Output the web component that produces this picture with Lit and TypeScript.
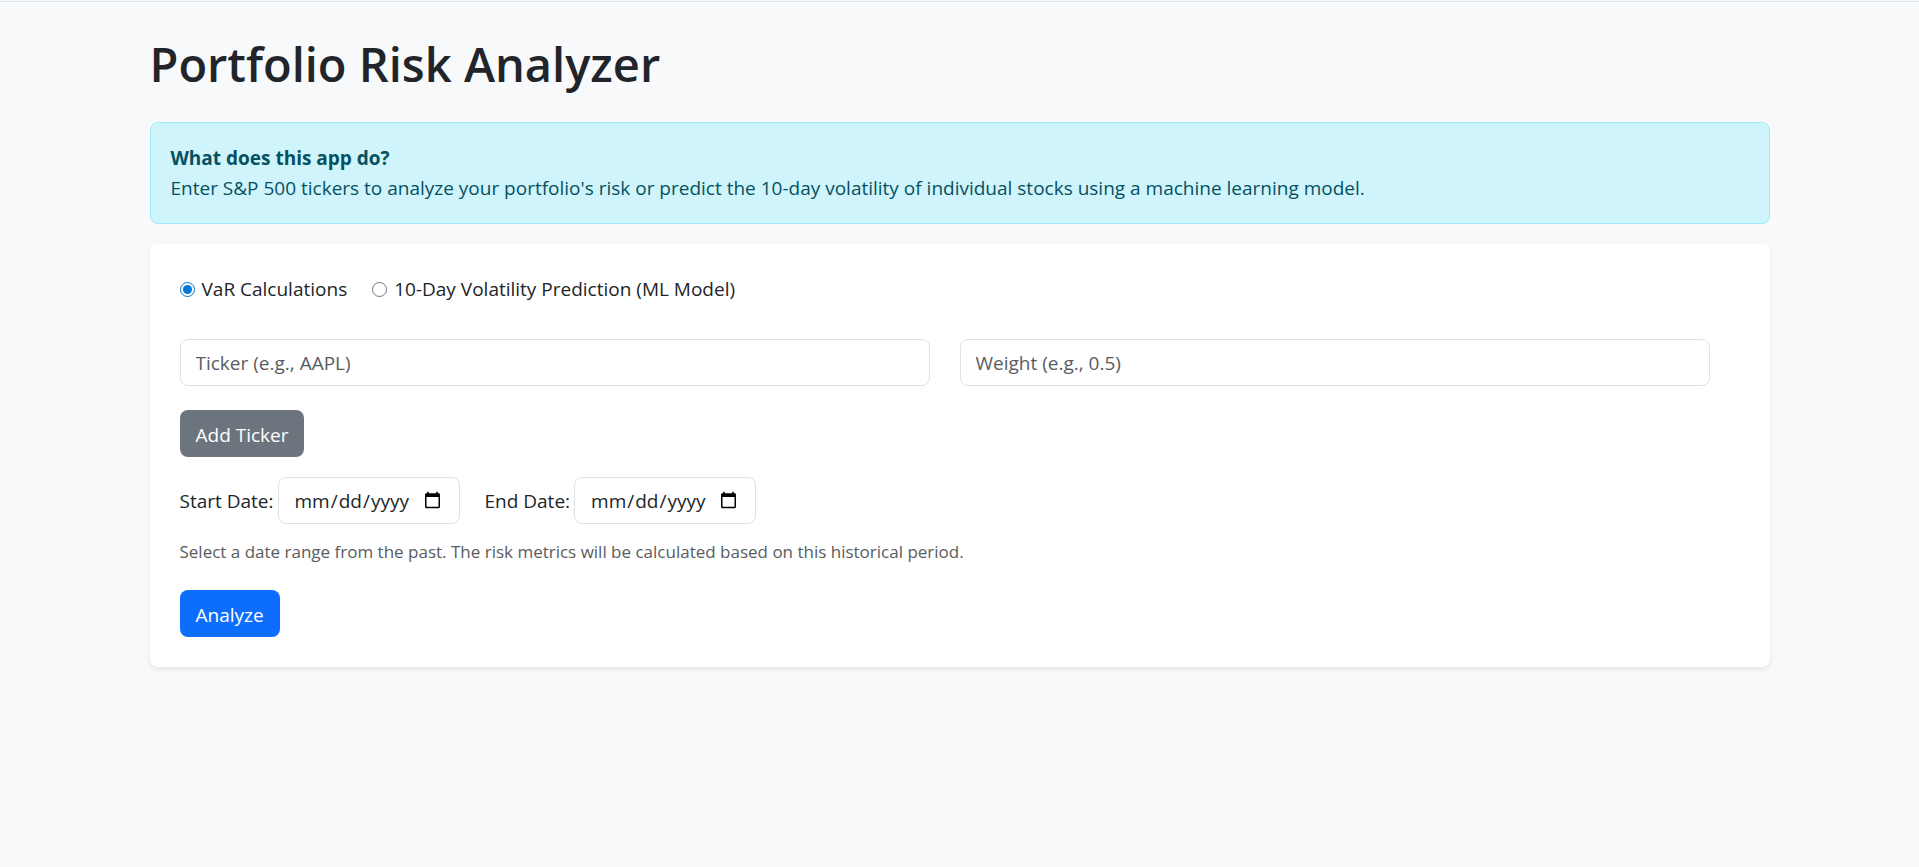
import { LitElement, html, css } from "lit";
import { customElement, state } from "lit/decorators.js";

type Mode = "var" | "ml";

interface Holding {
  ticker: string;
  weight: string;
}

@customElement("app-root")
export class AppRoot extends LitElement {
  static styles = css`
    :host {
      display: block;
      box-sizing: border-box;
      min-height: 100vh;
      padding-top: 1px;
      background: #f8f9fa;
      color: #212529;
      font-family: "Segoe UI", "Open Sans", "Noto Sans", sans-serif;
      font-size: 19px;
      line-height: 30px;
    }
    *,
    *::before,
    *::after {
      box-sizing: border-box;
    }
    .page {
      border-top: 1px solid #dee2e6;
    }
    .container {
      max-width: 1650px;
      margin: 0 auto;
      padding: 32px 15px 30px;
    }
    .title {
      margin: 0 0 28px;
      font-size: 47px;
      font-weight: 600;
      line-height: 60px;
    }
    .alert {
      margin-bottom: 20px;
      padding: 20px;
      border: 1px solid #9eeaf9;
      border-radius: 8px;
      background: #cff4fc;
      color: #055160;
    }
    .alert p {
      margin: 0;
    }
    .alert-heading {
      font-weight: 700;
    }
    .card {
      padding: 30px;
      border-radius: 8px;
      background: #fff;
      box-shadow: 0 3px 5px rgba(0, 0, 0, 0.075);
    }
    .modes {
      display: flex;
      flex-wrap: wrap;
      gap: 0 25px;
      margin: 0 0 35px;
      padding: 0;
      border: 0;
    }
    .mode {
      display: flex;
      align-items: center;
      gap: 7px;
    }
    .mode input {
      width: 15px;
      height: 15px;
      margin: 0;
      accent-color: #0078d4;
    }
    .holding {
      display: grid;
      grid-template-columns: 1fr 1fr;
      gap: 30px;
      margin-bottom: 24px;
      padding-right: 30px;
    }
    .control {
      min-width: 0;
      height: 47px;
      padding: 0 15px;
      border: 1px solid #dee2e6;
      border-radius: 8px;
      background: #fff;
      color: #212529;
      font: inherit;
    }
    .control::placeholder {
      color: #595c5f;
      opacity: 1;
    }
    .dates {
      display: flex;
      flex-wrap: wrap;
      gap: 10px 25px;
      margin: 20px 0 15px;
    }
    .date {
      display: flex;
      align-items: center;
      gap: 4px;
    }
    .date .control {
      width: 182px;
    }
    .hint {
      margin: 0 0 25px;
      color: #595c5f;
      font-size: 17px;
      line-height: 26px;
    }
    .button {
      display: block;
      height: 47px;
      padding: 2px 16px 0;
      border: 0;
      border-radius: 8px;
      color: #fff;
      font: inherit;
      cursor: pointer;
    }
    .secondary {
      background: #6c757d;
    }
    .primary {
      background: #0d6efd;
    }
  `;

  @state() private mode: Mode = "var";
  @state() private holdings: Holding[] = [{ ticker: "", weight: "" }];

  private addTicker() {
    this.holdings = [...this.holdings, { ticker: "", weight: "" }];
  }

  private renderMode(value: Mode, label: string) {
    return html`
      <label class="mode">
        <input
          type="radio"
          name="mode"
          .value=${value}
          .checked=${this.mode === value}
          @change=${() => (this.mode = value)}
        />
        <span>${label}</span>
      </label>
    `;
  }

  private renderDate(id: string, label: string) {
    return html`
      <div class="date">
        <label for=${id}>${label}</label>
        <input class="control" id=${id} type="date" />
      </div>
    `;
  }

  render() {
    return html`
      <div class="page">
        <main class="container">
          <h1 class="title">Portfolio Risk Analyzer</h1>
          <section class="alert">
            <p class="alert-heading">What does this app do?</p>
            <p>
              Enter S&amp;P 500 tickers to analyze your portfolio's risk or predict the 10-day
              volatility of individual stocks using a machine learning model.
            </p>
          </section>
          <form class="card" @submit=${(e: Event) => e.preventDefault()}>
            <fieldset class="modes">
              ${this.renderMode("var", "VaR Calculations")}
              ${this.renderMode("ml", "10-Day Volatility Prediction (ML Model)")}
            </fieldset>
            ${this.holdings.map(
              () => html`
                <div class="holding">
                  <input class="control" type="text" aria-label="Ticker" placeholder="Ticker (e.g., AAPL)" />
                  <input class="control" type="text" aria-label="Weight" placeholder="Weight (e.g., 0.5)" />
                </div>
              `
            )}
            <button class="button secondary" type="button" @click=${this.addTicker}>Add Ticker</button>
            <div class="dates">
              ${this.renderDate("start", "Start Date:")} ${this.renderDate("end", "End Date:")}
            </div>
            <p class="hint">
              Select a date range from the past. The risk metrics will be calculated based on this
              historical period.
            </p>
            <button class="button primary" type="submit">Analyze</button>
          </form>
        </main>
      </div>
    `;
  }
}
